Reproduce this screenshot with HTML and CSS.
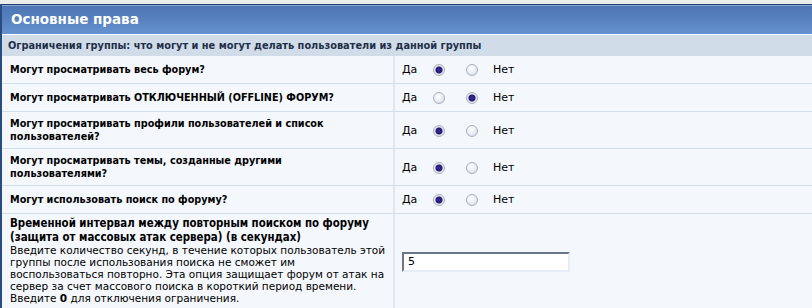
FILE: index.html
```html
<!DOCTYPE html>
<html lang="ru">
<head>
    <meta charset="UTF-8">
    <title>Основные права</title>
    <link rel="stylesheet" href="styles.css">
</head>
<body>

    <div class="panel">
        <div class="panel-head">Основные права</div>
        <div class="panel-sub">Ограничения группы: что могут и не могут делать пользователи из данной группы</div>

        <div class="opt-row">
            <div class="opt-label">Могут просматривать весь форум?</div>
            <div class="opt-value">
                <span class="yes">Да</span>
                <input type="radio" name="view" checked>
                <input type="radio" name="view">
                <span class="no">Нет</span>
            </div>
        </div>

        <div class="opt-row">
            <div class="opt-label">Могут просматривать ОТКЛЮЧЕННЫЙ (OFFLINE) ФОРУМ?</div>
            <div class="opt-value">
                <span class="yes">Да</span>
                <input type="radio" name="offline">
                <input type="radio" name="offline" checked>
                <span class="no">Нет</span>
            </div>
        </div>

        <div class="opt-row">
            <div class="opt-label">Могут просматривать профили пользователей и список пользователей?</div>
            <div class="opt-value">
                <span class="yes">Да</span>
                <input type="radio" name="profiles" checked>
                <input type="radio" name="profiles">
                <span class="no">Нет</span>
            </div>
        </div>

        <div class="opt-row">
            <div class="opt-label">Могут просматривать темы, созданные другими пользователями?</div>
            <div class="opt-value">
                <span class="yes">Да</span>
                <input type="radio" name="threads" checked>
                <input type="radio" name="threads">
                <span class="no">Нет</span>
            </div>
        </div>

        <div class="opt-row">
            <div class="opt-label">Могут использовать поиск по форуму?</div>
            <div class="opt-value">
                <span class="yes">Да</span>
                <input type="radio" name="search" checked>
                <input type="radio" name="search">
                <span class="no">Нет</span>
            </div>
        </div>

        <div class="opt-row">
            <div class="opt-label opt-label-long">
                Временной интервал между повторным поиском по форуму (защита от массовых атак сервера) (в секундах)
                <div class="opt-desc">Введите количество секунд, в течение которых пользователь этой группы после использования поиска не сможет им воспользоваться повторно. Эта опция защищает форум от атак на сервер за счет массового поиска в короткий период времени. Введите <b>0</b> для отключения ограничения.</div>
            </div>
            <div class="opt-value">
                <input type="text" class="text-input" value="5">
            </div>
        </div>
    </div>

</body>
</html>
```

FILE: styles.css
```css
body {
    margin: 0;
    padding-top: 4px;
    background-color: #ececec;
    font-family: "DejaVu Sans", Verdana, sans-serif;
    font-size: 11px;
    color: #000;
}

.panel {
    border-left: 2px solid #2a4d80;
    background-color: #f4f7fb;
}

.panel-head {
    height: 29px;
    line-height: 29px;
    padding-left: 9px;
    border-top: 1px solid #23406c;
    border-bottom: 1px solid #fff;
    background: linear-gradient(to bottom, #86a8da 0, #86a8da 1px, #4e76b3 1px, #557fbd 45%, #6893d1 100%);
    color: #fff;
    font-size: 13.5px;
    font-weight: bold;
}

.panel-sub {
    height: 21px;
    line-height: 22px;
    padding-left: 6px;
    background-color: #d1dce9;
    color: #1e2f48;
    font-family: "DejaVu Sans Condensed", "DejaVu Sans", sans-serif;
    font-size: 10.9px;
    font-weight: bold;
}

.opt-row {
    display: grid;
    grid-template-columns: 393px 1fr;
    min-height: 27px;
    border-bottom: 1px solid #d3deeb;
}

.opt-label {
    padding: 5px 40px 5px 8px;
    font-family: "DejaVu Sans Condensed", "DejaVu Sans", sans-serif;
    font-size: 10.75px;
    font-weight: bold;
    line-height: 13px;
    display: flex;
    flex-direction: column;
    justify-content: center;
    border-right: 2px solid #dfe7f1;
}

.opt-label-long {
    padding: 2px 2px 5px 8px;
    font-size: 11.4px;
    line-height: 14px;
}

.opt-desc {
    font-family: "DejaVu Sans", Verdana, sans-serif;
    font-size: 10.5px;
    font-weight: normal;
    line-height: 12px;
}

.opt-value {
    display: flex;
    align-items: center;
    padding-left: 7px;
}

.yes {
    width: 31px;
}

.no {
    margin-left: 6px;
}

.opt-value input[type="radio"] {
    appearance: none;
    width: 12px;
    height: 12px;
    margin: 1px 9px 0 0;
    border-radius: 50%;
    border: 1px solid #a9b0ba;
    background: radial-gradient(circle at 40% 35%, #ffffff 0, #e9eef6 50%, #c9d3e2 100%);
}

.opt-value input[type="radio"] + input[type="radio"] {
    margin-left: 12px;
}

.opt-value input[type="radio"]:checked {
    background: radial-gradient(circle at 50% 50%, #3a2f9e 0, #22186e 3px, #dfe4ee 4px, #f2f4f8 100%);
}

.text-input {
    width: 156px;
    height: 14px;
    padding: 1px 4px;
    border-style: solid;
    border-width: 2px;
    border-color: #6c7787 #e6edf7 #e6edf7 #6c7787;
    background-color: #fff;
    font-family: "DejaVu Sans", Verdana, sans-serif;
    font-size: 11px;
    color: #000;
}
```
